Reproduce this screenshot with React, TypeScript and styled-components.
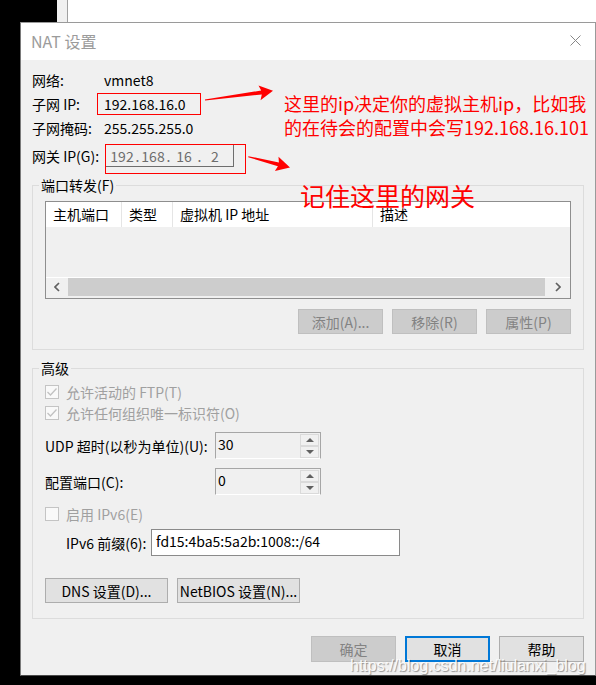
import React from 'react';
import styled, { createGlobalStyle, css } from 'styled-components';

const GlobalStyle = createGlobalStyle`
  html, body {
    margin: 0;
    padding: 0;
    background: #000;
  }
  * {
    box-sizing: border-box;
  }
`;

const Page = styled.div`
  position: relative;
  width: 596px;
  height: 685px;
  overflow: hidden;
  background: #000;
  display: flex;
  flex-direction: column;
  font-family: "Noto Sans CJK SC", "Noto Sans", sans-serif;
  font-size: 14px;
  color: #000;
`;

/* window behind the dialog */
const BackWindow = styled.div`
  height: 22px;
  display: flex;
  flex-shrink: 0;
`;

const BackGap = styled.div`
  width: 57px;
  background: #000;
`;

const BackFrame = styled.div`
  width: 11px;
  background: #f0f0f0;
  border-right: 1px solid #a0a0a0;
`;

const BackPane = styled.div`
  flex: 1;
  background: #fff;
`;

const DialogRow = styled.div`
  display: flex;
  flex-shrink: 0;
`;

const LeftGap = styled.div`
  width: 20px;
`;

const Dialog = styled.div`
  width: 576px;
  height: 654px;
  border: 1px solid #9a9a9a;
  border-bottom-color: #4a4a4a;
  border-left-color: #7a7a7a;
  background: #f0f0f0;
  display: flex;
  flex-direction: column;
`;

const TitleBar = styled.div`
  height: 37px;
  flex-shrink: 0;
  background: #fff;
  display: flex;
  align-items: center;
  justify-content: space-between;
  padding: 0 14px 2px 10px;
`;

const Title = styled.div`
  font-size: 16px;
  color: #9b9b9b;
`;

const Body = styled.div`
  flex: 1;
  padding: 8px 11px 0 11px;
  display: flex;
  flex-direction: column;
`;

const InfoRow = styled.div<{ $h: number; $mt?: number }>`
  display: flex;
  align-items: center;
  height: ${(p) => p.$h}px;
  margin-top: ${(p) => p.$mt ?? 0}px;
  white-space: nowrap;
`;

const InfoLabel = styled.div`
  width: 72px;
  flex-shrink: 0;
`;

const IpField = styled.div`
  margin-left: 1px;
  width: 129px;
  height: 23px;
  display: flex;
  align-items: center;
  padding-left: 3px;
  background: #f0f0f0;
  border: 1px solid #6e6e6e;
  border-top-color: #a0a0a0;
  border-left-color: #a0a0a0;
  color: #6d6d6d;
`;

const IpOctet = styled.span`
  width: 26px;
  text-align: center;
`;

const IpDot = styled.span`
  width: 5px;
  text-align: center;
`;

const Group = styled.fieldset<{ $mt: number }>`
  margin: ${(p) => p.$mt}px 0 0 0;
  padding: 0;
  min-width: 0;
  border: 1px solid #dcdcdc;
`;

const Legend = styled.legend`
  margin-left: 6px;
  padding: 0 2px;
  line-height: 16px;
  font-size: 14px;
`;

const GroupBody = styled.div<{ $pt: number }>`
  padding: ${(p) => p.$pt}px 12px 15px 12px;
  display: flex;
  flex-direction: column;
`;

const PortTable = styled.div`
  height: 98px;
  border: 1px solid #8e8e8e;
  background: #f0f0f0;
  display: flex;
  flex-direction: column;
`;

const HeaderRow = styled.div`
  height: 25px;
  flex-shrink: 0;
  display: flex;
  background: #fff;
`;

const HeaderCell = styled.div<{ $w?: number }>`
  ${(p) =>
    p.$w
      ? css`
          width: ${p.$w}px;
          border-right: 1px solid #e5e5e5;
        `
      : css`
          flex: 1;
        `}
  padding-left: 7px;
  line-height: 25px;
  white-space: nowrap;
`;

const TableBody = styled.div`
  flex: 1;
`;

const HScrollBar = styled.div`
  height: 21px;
  flex-shrink: 0;
  border-top: 1px solid #fff;
  display: flex;
`;

const ScrollArrow = styled.div<{ $w: number }>`
  width: ${(p) => p.$w}px;
  display: flex;
  align-items: center;
  justify-content: center;
  padding-bottom: 2px;
`;

const ScrollThumb = styled.div`
  flex: 1;
  background: #cdcdcd;
  margin-bottom: 2px;
`;

const ButtonRow = styled.div<{ $mt: number; $end?: boolean }>`
  display: flex;
  justify-content: ${(p) => (p.$end ? 'flex-end' : 'flex-start')};
  gap: 9px;
  margin-top: ${(p) => p.$mt}px;
`;

type ButtonKind = 'normal' | 'disabled' | 'focused';

const WinButton = styled.button<{ $w: number; $h: number; $kind: ButtonKind }>`
  width: ${(p) => p.$w}px;
  height: ${(p) => p.$h}px;
  padding: 0;
  font-family: inherit;
  font-size: 14px;
  white-space: nowrap;
  ${(p) =>
    p.$kind === 'disabled'
      ? css`
          background: #cccccc;
          border: 1px solid #bfbfbf;
          color: #838383;
        `
      : p.$kind === 'focused'
        ? css`
            background: #e1e1e1;
            border: 2px solid #0078d7;
            color: #000;
          `
        : css`
            background: #e1e1e1;
            border: 1px solid #adadad;
            color: #000;
          `}
`;

const CheckRow = styled.div<{ $mt?: number }>`
  display: flex;
  align-items: center;
  gap: 7px;
  height: 21px;
  margin-top: ${(p) => p.$mt ?? 0}px;
  color: #a0a0a0;
  white-space: nowrap;
`;

const CheckBox = styled.div`
  width: 14px;
  height: 14px;
  border: 1px solid #c4c4c4;
  background: #f9f9f9;
  display: flex;
  align-items: center;
  justify-content: center;
`;

const FieldRow = styled.div<{ $mt: number }>`
  display: flex;
  align-items: center;
  height: 27px;
  margin-top: ${(p) => p.$mt}px;
  white-space: nowrap;
`;

const FieldLabel = styled.div<{ $w: number; $indent?: number }>`
  width: ${(p) => p.$w}px;
  margin-left: ${(p) => p.$indent ?? 0}px;
  flex-shrink: 0;
`;

const SpinBox = styled.div`
  width: 106px;
  height: 27px;
  display: flex;
  background: #f0f0f0;
  border: 1px solid #a6a6a6;
  border-bottom-color: #fff;
`;

const SpinText = styled.div`
  flex: 1;
  padding: 2px 0 0 2px;
  line-height: 18px;
`;

const SpinButtons = styled.div`
  width: 20px;
  display: flex;
  flex-direction: column;
  padding: 1px 1px 0 0;
`;

const SpinButton = styled.div`
  flex: 1;
  border: 1px solid #dadada;
  display: flex;
  align-items: center;
  justify-content: center;
`;

const SpinArrow = styled.div<{ $up?: boolean }>`
  width: 0;
  height: 0;
  border-left: 4px solid transparent;
  border-right: 4px solid transparent;
  ${(p) =>
    p.$up
      ? css`
          border-bottom: 4px solid #606060;
        `
      : css`
          border-top: 4px solid #606060;
        `}
`;

const PrefixInput = styled.div`
  width: 249px;
  height: 27px;
  background: #fff;
  border: 1px solid #8a8a8a;
  padding: 2px 0 0 4px;
  line-height: 18px;
`;

/* annotations drawn over the screenshot */
const Overlay = styled.svg`
  position: absolute;
  left: 0;
  top: 0;
  pointer-events: none;
`;

const RedBox = styled.div<{ $x: number; $y: number; $w: number; $h: number }>`
  position: absolute;
  left: ${(p) => p.$x}px;
  top: ${(p) => p.$y}px;
  width: ${(p) => p.$w}px;
  height: ${(p) => p.$h}px;
  border: 1px solid #ff0000;
  pointer-events: none;
`;

const RedNote = styled.div<{ $x: number; $y: number; $size: number; $lh: number }>`
  position: absolute;
  left: ${(p) => p.$x}px;
  top: ${(p) => p.$y}px;
  font-size: ${(p) => p.$size}px;
  line-height: ${(p) => p.$lh}px;
  color: #ff0000;
  white-space: nowrap;
`;

const Watermark = styled.div`
  position: absolute;
  left: 350px;
  top: 657px;
  font-family: "Liberation Sans", Arial, sans-serif;
  font-size: 16px;
  line-height: 18px;
  color: rgba(255, 255, 255, 0.92);
  text-shadow: 1px 1px 1px rgba(0, 0, 0, 0.4);
  white-space: nowrap;
`;

const CloseIcon = () => (
  <svg width="11" height="11" viewBox="0 0 11 11">
    <path d="M0.5 0.5 L10.5 10.5 M10.5 0.5 L0.5 10.5" stroke="#888" strokeWidth="1" fill="none" />
  </svg>
);

const Check = () => (
  <svg width="12" height="12" viewBox="0 0 12 12">
    <path d="M1.5 6 L4.5 9 L10.5 2.5" stroke="#c2c2c2" strokeWidth="1.3" fill="none" />
  </svg>
);

const Chevron = ({ right }: { right?: boolean }) => (
  <svg width="6" height="10" viewBox="0 0 6 10">
    <path
      d={right ? 'M1 1 L5 5 L1 9' : 'M5 1 L1 5 L5 9'}
      stroke="#606060"
      strokeWidth="1.7"
      fill="none"
    />
  </svg>
);

const Spinner = ({ value }: { value: string }) => (
  <SpinBox>
    <SpinText>{value}</SpinText>
    <SpinButtons>
      <SpinButton>
        <SpinArrow $up />
      </SpinButton>
      <SpinButton>
        <SpinArrow />
      </SpinButton>
    </SpinButtons>
  </SpinBox>
);

const App = () => {
  const octets = ['192', '168', '16', '2'];
  return (
    <Page>
      <GlobalStyle />
      <BackWindow>
        <BackGap />
        <BackFrame />
        <BackPane />
      </BackWindow>
      <DialogRow>
        <LeftGap />
        <Dialog>
          <TitleBar>
            <Title>NAT 设置</Title>
            <CloseIcon />
          </TitleBar>
          <Body>
            <InfoRow $h={24}>
              <InfoLabel>网络:</InfoLabel>
              <span>vmnet8</span>
            </InfoRow>
            <InfoRow $h={24}>
              <InfoLabel>子网 IP:</InfoLabel>
              <span>192.168.16.0</span>
            </InfoRow>
            <InfoRow $h={24}>
              <InfoLabel>子网掩码:</InfoLabel>
              <span>255.255.255.0</span>
            </InfoRow>
            <InfoRow $h={23} $mt={4}>
              <InfoLabel>网关 IP(G):</InfoLabel>
              <IpField>
                {octets.map((o, i) => (
                  <React.Fragment key={i}>
                    {i > 0 && <IpDot>.</IpDot>}
                    <IpOctet>{o}</IpOctet>
                  </React.Fragment>
                ))}
              </IpField>
            </InfoRow>

            <Group $mt={10}>
              <Legend>端口转发(F)</Legend>
              <GroupBody $pt={8}>
                <PortTable>
                  <HeaderRow>
                    <HeaderCell $w={76}>主机端口</HeaderCell>
                    <HeaderCell $w={51}>类型</HeaderCell>
                    <HeaderCell $w={200}>虚拟机 IP 地址</HeaderCell>
                    <HeaderCell>描述</HeaderCell>
                  </HeaderRow>
                  <TableBody />
                  <HScrollBar>
                    <ScrollArrow $w={22}>
                      <Chevron />
                    </ScrollArrow>
                    <ScrollThumb />
                    <ScrollArrow $w={25}>
                      <Chevron right />
                    </ScrollArrow>
                  </HScrollBar>
                </PortTable>
                <ButtonRow $mt={10} $end>
                  <WinButton $w={85} $h={25} $kind="disabled">添加(A)...</WinButton>
                  <WinButton $w={85} $h={25} $kind="disabled">移除(R)</WinButton>
                  <WinButton $w={85} $h={25} $kind="disabled">属性(P)</WinButton>
                </ButtonRow>
              </GroupBody>
            </Group>

            <Group $mt={10}>
              <Legend>高级</Legend>
              <GroupBody $pt={5}>
                <CheckRow>
                  <CheckBox>
                    <Check />
                  </CheckBox>
                  允许活动的 FTP(T)
                </CheckRow>
                <CheckRow>
                  <CheckBox>
                    <Check />
                  </CheckBox>
                  允许任何组织唯一标识符(O)
                </CheckRow>
                <FieldRow $mt={9}>
                  <FieldLabel $w={170}>UDP 超时(以秒为单位)(U):</FieldLabel>
                  <Spinner value="30" />
                </FieldRow>
                <FieldRow $mt={9}>
                  <FieldLabel $w={170}>配置端口(C):</FieldLabel>
                  <Spinner value="0" />
                </FieldRow>
                <CheckRow $mt={8}>
                  <CheckBox />
                  启用 IPv6(E)
                </CheckRow>
                <FieldRow $mt={5}>
                  <FieldLabel $w={85} $indent={21}>
                    IPv6 前缀(6):
                  </FieldLabel>
                  <PrefixInput>fd15:4ba5:5a2b:1008::/64</PrefixInput>
                </FieldRow>
                <ButtonRow $mt={22}>
                  <WinButton $w={123} $h={25} $kind="normal">DNS 设置(D)...</WinButton>
                  <WinButton $w={123} $h={25} $kind="normal">NetBIOS 设置(N)...</WinButton>
                </ButtonRow>
              </GroupBody>
            </Group>

            <ButtonRow $mt={17} $end>
              <WinButton $w={85} $h={26} $kind="disabled">确定</WinButton>
              <WinButton $w={85} $h={26} $kind="focused">取消</WinButton>
              <WinButton $w={85} $h={26} $kind="normal">帮助</WinButton>
            </ButtonRow>
          </Body>
        </Dialog>
      </DialogRow>

      <RedBox $x={97} $y={93} $w={104} $h={22} />
      <RedBox $x={105} $y={144} $w={141} $h={30} />
      <RedNote $x={284} $y={91} $size={18} $lh={24}>
        这里的ip决定你的虚拟主机ip，比如我
        <br />
        的在待会的配置中会写192.168.16.101
      </RedNote>
      <RedNote $x={300} $y={179} $size={25} $lh={32}>
        记住这里的网关
      </RedNote>
      <Overlay width="596" height="685" viewBox="0 0 596 685">
        <polygon
          points="204.9,99.5 261.2,90.5 258.5,85.4 273,90.8 260.5,100.2 261.8,94.5 205.1,100.5"
          fill="#ff0000"
        />
        <polygon
          points="248.4,156.2 278.9,162.4 278.5,156.8 290,167.5 274.9,171 277.9,166.2 248.2,157.2"
          fill="#ff0000"
        />
      </Overlay>
      <Watermark>https://blog.csdn.net/liulanxi_blog</Watermark>
    </Page>
  );
};

export default App;
